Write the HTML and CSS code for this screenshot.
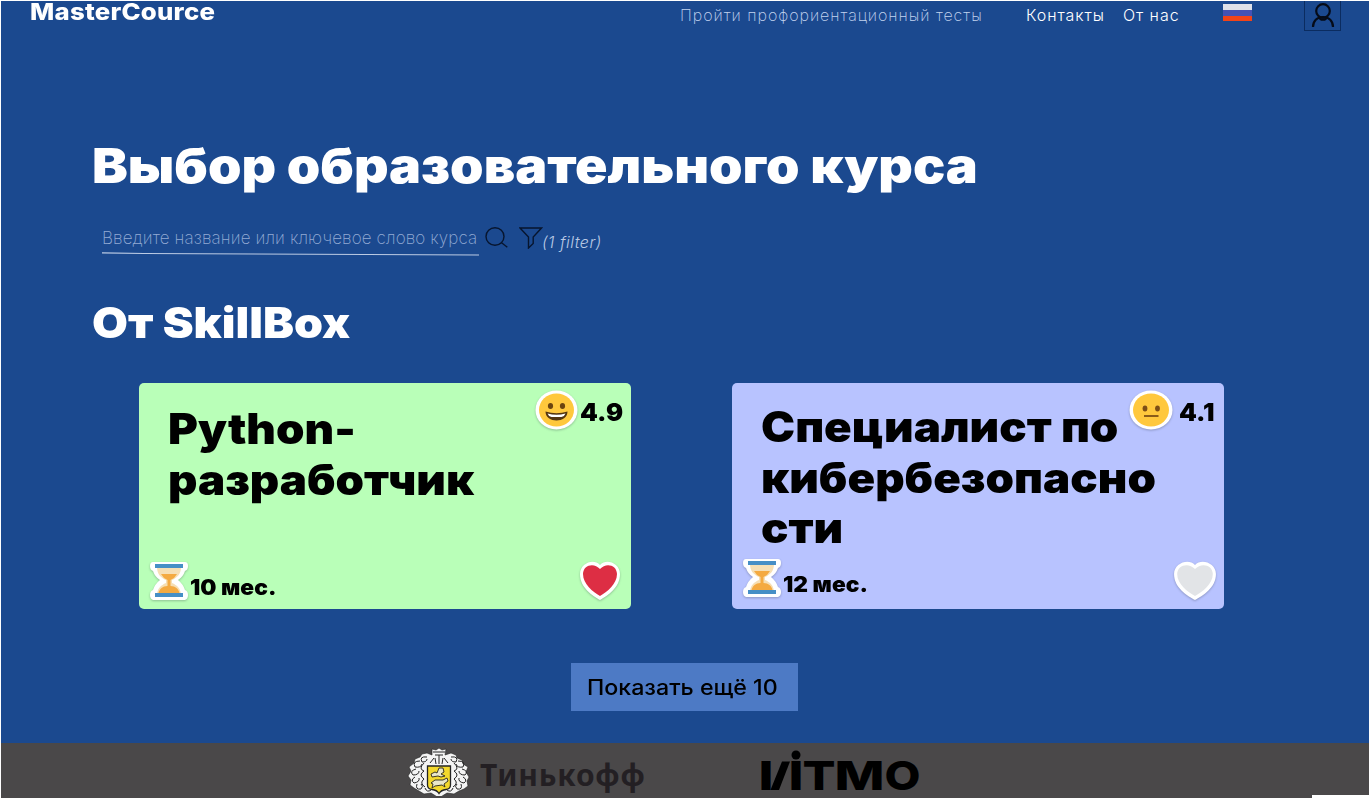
FILE: index.html
```html
<!DOCTYPE html>
<html lang="ru">
<head>
<meta charset="utf-8">
<title>MasterCource</title>
<link rel="stylesheet" href="styles.css">
</head>
<body>
<svg class="defs" aria-hidden="true">
  <defs>
    <symbol id="hourglass" viewBox="0 0 42 42">
      <path class="sticker" d="M5 2h32q3 0 3 4 0 4-3 5-2 6-7 9 5 4 7 10 3 1 3 5t-3 5H5q-3-1-3-5t3-5q2-6 7-10-5-3-7-9-3-1-3-5t3-4z"/>
      <path fill="#f6dfb4" d="M9 7h24c0 7-4 11-9 13v3c5 2 9 6 9 12H9c0-6 4-10 9-12v-3C13 18 9 14 9 7z"/>
      <path fill="#f4aa41" d="M13 14h16q-2 4-6.500 6v6c5 0 8 3 9 7h-21c1-4 4-7 9-7v-6Q15 18 13 14z"/>
      <path fill="#468fc6" d="M7 4h28v4H7zM7 33h28v4H7z"/>
    </symbol>
    <symbol id="heart" viewBox="0 0 42 40" preserveAspectRatio="none">
      <path class="sticker" d="M21 39C14 35 1 27 1 13 1 2 15-3 21 4c6-7 20-2 20 9 0 14-13 22-20 26z"/>
      <path fill="currentColor" d="M21 35C14 31 4 23 4 13 4 4 15 1 21 8c6-7 17-4 17 5 0 10-10 18-17 22z"/>
    </symbol>
  </defs>
</svg>
<div class="page">
  <header class="header">
    <div class="brand"><span>MasterCource</span></div>
    <nav class="nav">
      <a class="nav-tests">Пройти профориентационный тесты</a>
      <a class="nav-contacts">Контакты</a>
      <a class="nav-about">От нас</a>
    </nav>
    <div class="flag"><i class="flag-white"></i><i class="flag-blue"></i><i class="flag-red"></i></div>
    <button class="account" aria-label="Профиль">
      <svg width="24" height="26" viewBox="0 0 24 26"><circle cx="12" cy="9" r="6.800"/><path d="M2 25c0-6 4-10 10-10s10 4 10 10M8 14c0 5 8 5 8 0"/></svg>
    </button>
  </header>
  <main class="main">
    <h1 class="title">Выбор образовательного курса</h1>
    <div class="search">
      <div class="field">
        <span class="placeholder">Введите название или ключевое слово курса</span>
        <svg class="underline" width="377" height="4" viewBox="0 0 377 4"><path d="M0 .8L42 1.500 377 3"/></svg>
      </div>
      <svg class="icon-search" width="24" height="22" viewBox="0 0 24 22"><ellipse cx="10" cy="9.500" rx="9" ry="8.700"/><path d="M16.300 15.500l6 4.700"/></svg>
      <svg class="icon-filter" width="24" height="22" viewBox="0 0 24 22"><path d="M1 1h21.500l-8.300 9v6.500L9.500 21V10z"/></svg>
      <span class="filter-count">(1 filter)</span>
    </div>
    <h2 class="provider">От SkillBox</h2>
    <div class="cards">
      <article class="card card-green">
        <h3 class="card-title">Python-<br>разработчик</h3>
        <div class="rating">
          <svg width="43" height="40" viewBox="0 0 43 40"><ellipse class="sticker" cx="21.500" cy="20" rx="21" ry="19.500"/><ellipse cx="21.500" cy="20" rx="17.500" ry="16.500" fill="#ffc83d"/><ellipse cx="15.500" cy="16" rx="2.600" ry="3" fill="#6b4410"/><ellipse cx="27.500" cy="16" rx="2.600" ry="3" fill="#6b4410"/><path d="M10.500 21.500q11 3.500 22 0c0 12-22 12-22 0z" fill="#543510"/><path d="M12.500 23.500q9 2.500 18 0-1 3-4 3.500h-10q-3-.5-4-3.500z" fill="#fff"/></svg>
          <span>4.9</span>
        </div>
        <div class="duration"><svg width="42" height="42"><use href="#hourglass"/></svg><span>10 мес.</span></div>
        <svg class="like like-on" width="42" height="40"><use href="#heart"/></svg>
      </article>
      <article class="card card-violet">
        <h3 class="card-title">Специалист по<br>кибербезопасно<br>сти</h3>
        <div class="rating">
          <svg width="44" height="40" viewBox="0 0 44 40"><ellipse class="sticker" cx="22" cy="20" rx="21.500" ry="19.500"/><ellipse cx="22" cy="20" rx="18" ry="16.500" fill="#ffc83d"/><ellipse cx="16" cy="18.500" rx="2.400" ry="3" fill="#7d4e16"/><ellipse cx="28.500" cy="18.500" rx="2.400" ry="3" fill="#7d4e16"/><path d="M15 26h14.500" stroke="#7d4e16" stroke-width="1.800"/></svg>
          <span>4.1</span>
        </div>
        <div class="duration"><svg width="42" height="42"><use href="#hourglass"/></svg><span>12 мес.</span></div>
        <svg class="like like-off" width="44" height="40"><use href="#heart"/></svg>
      </article>
    </div>
    <button class="more"><span>Показать ещё 10</span></button>
  </main>
  <footer class="footer">
    <div class="tinkoff">
      <svg width="64" height="48" viewBox="0 0 64 48">
        <path fill="#f4f4f4" stroke="#242424" stroke-width=".6" d="M25 1l4 1 3-2 3 2 4-1-1 6 6-2 5 2 1 3 5 2 1 4 5 3-2 5 3 5-2 4 1 5-4 3-5 2-5 3-7-1-8 5-8-5-7 1-5-3-5-3-4-3 1-5-3-4 3-5-2-4 5-4 1-4 5-2 2-3 5-1 5 2z"/>
        <g fill="none" stroke="#252525" stroke-width="1">
          <path d="M26 4h12M28 7h8M32 7v9M27 10l-4 5M37 10l4 5M28 10l1 6M36 10l-1 6"/>
          <path d="M20 9q-8-1-5 5 5 0 5-3M13 13q-8 0-5 6 6 1 7-3M9 21q-7 2-3 6 6 0 6-4M8 29q-5 3-1 6 6-1 5-5M10 36q-2 6 4 5 3-3 0-5M18 40q2 5 6 2M17 15q-6 6 0 8-6 4 0 8-5 4 1 8"/>
          <path d="M44 9q8-1 5 5-5 0-5-3M51 13q8 0 5 6-6 1-7-3M55 21q7 2 3 6-6 0-6-4M56 29q5 3 1 6-6-1-5-5M54 36q2 6-4 5-3-3 0-5M46 40q-2 5-6 2M47 15q6 6 0 8 6 4 0 8 5 4-1 8"/>
        </g>
        <path fill="#f3d82c" stroke="#242424" stroke-width="1.300" d="M20.500 18h23v19q0 4-4.500 4.500-5 .5-7 4-2-3.500-7-4-4.500-.5-4.500-4.500z"/>
        <path fill="#e9e7c9" stroke="#29261a" stroke-width=".9" d="M24 26l4-2 2 1 2-5 4 0 1 4-3 2 4 2-4 1-3-1-6 1zM24 35l4-3 8 0 4-2 1 3-4 3 1 3-3-2-7 1-3 2 1-4z"/>
      </svg>
      <span>Тинькофф</span>
    </div>
    <svg class="itmo" width="162" height="44" viewBox="0 0 162 44">
      <text x="-1.500" y="40" textLength="15" lengthAdjust="spacingAndGlyphs">I</text>
      <path d="M10.500 40L22 11.500h8L19 40z"/>
      <text x="28.500" y="40" textLength="15" lengthAdjust="spacingAndGlyphs">I</text>
      <circle cx="36" cy="5" r="4.500"/>
      <text x="42.500" y="40" textLength="33" lengthAdjust="spacingAndGlyphs">T</text>
      <text x="74.500" y="40" textLength="50" lengthAdjust="spacingAndGlyphs">M</text>
      <text x="124.500" y="40" textLength="36" lengthAdjust="spacingAndGlyphs">O</text>
    </svg>
    <i class="corner"></i>
  </footer>
</div>
</body>
</html>
```
FILE: styles.css
```css
* { box-sizing: border-box; }
body { margin: 0; background: #fff; font-family: Inter, "Noto Sans", sans-serif; }
h1, h2, h3 { margin: 0; font-weight: 900; white-space: nowrap; transform-origin: 0 50%; }
button { font: inherit; border: 0; padding: 0; }
.defs { position: absolute; width: 0; height: 0; }
.page { width: 1370px; height: 798px; padding: 1px 1px 0; display: flex; flex-direction: column; overflow: hidden; background: #fff; }
.header { height: 31px; display: flex; background: #1b498f; color: #fff; align-items: flex-start; }
.brand { width: 649px; padding-left: 29px; font-size: 23px; line-height: 22px; font-weight: 800; letter-spacing: 0.2px; }
.brand span { display: inline-block; transform: scaleX(1.12); transform-origin: 0 50%; }
.nav { width: 573px; padding: 4px 0 0 30px; display: flex; font-size: 16px; line-height: 20px; font-weight: 300; white-space: nowrap; }
.nav-tests { width: 346px; font-weight: 200; color: #c3d4ef; letter-spacing: 0.97px; }
.nav-contacts { width: 97px; letter-spacing: 0.95px; }
.nav-about { letter-spacing: 0.95px; }
.flag { width: 29px; margin: 3px 0 0; display: grid; grid-template-rows: 6px 6px 5px; }
.flag-white { background: #dfe1e9; }
.flag-blue { background: #4452b4; }
.flag-red { background: #f24418; }
.account { width: 37px; height: 30px; margin-left: 52px; border: 1px solid #0b2c60; border-top: 0; background: none; display: flex; justify-content: center; padding-top: 1px; }
.account svg { fill: none; stroke: #050b18; stroke-width: 2.2; }
.main { height: 711px; flex: none; background: #1b498f; display: flex; flex-direction: column; align-items: flex-start; padding: 105px 0 0 91px; }
.title { color: #fff; font-size: 48px; line-height: 58px; transform: scaleX(1.118); }
.search { height: 40px; margin: 29px 0 0 10px; display: flex; align-items: flex-start; }
.field { width: 377px; display: flex; flex-direction: column; }
.placeholder { font-size: 17px; line-height: 24px; font-weight: 200; color: #93abd4; white-space: nowrap; letter-spacing: 0.13px; margin: 2px 0 1.5px; }
.underline { fill: none; stroke: #bccbe4; stroke-width: 1.2; }
.icon-search { margin: 3px 0 0 6px; fill: none; stroke: #07152e; stroke-width: 1.4; }
.icon-filter { margin: 3px 0 0 10px; fill: none; stroke: #07152e; stroke-width: 1.4; }
.filter-count { font-size: 16px; line-height: 20px; font-style: italic; font-weight: 300; color: #b9c9e5; margin-top: 8px; white-space: nowrap; letter-spacing: 0.5px; margin-left: -1px; }
.provider { color: #fff; font-size: 42px; line-height: 50px; margin-top: 34px; transform: scaleX(1.105); }
.cards { display: flex; gap: 101px; margin: 35px 0 0 47px; }
.card { position: relative; width: 492px; height: 226px; border-radius: 5px; padding: 21px 0 0 29px; color: #000; }
.card-green { background: #b9ffb8; }
.card-violet { background: #b8c3ff; }
.card-title { font-size: 42px; line-height: 50.5px; width: 400px; transform: scaleX(1.087); }
.card-violet .card-title { margin-top: -2px; }
.sticker { fill: #fff; }
.card svg { filter: drop-shadow(0 1px 1px rgba(40, 50, 60, .3)); overflow: visible; }
.rating { position: absolute; top: 7px; left: 396px; display: flex; align-items: center; font-size: 24px; font-weight: 900; gap: 2px; }
.rating span, .duration span { transform: scaleX(1.06); transform-origin: 0 50%; }
.rating span { padding-top: 4px; }
.card-violet .rating { left: 397px; gap: 6px; }
.duration { position: absolute; left: 9px; bottom: 7px; display: flex; align-items: flex-end; font-size: 21.5px; line-height: 28px; font-weight: 900; white-space: nowrap; }
.duration span { margin-bottom: 1px; }
.card-violet .duration { bottom: 10px; }
.like { position: absolute; right: 10px; bottom: 8px; }
.like-on { color: #dd2e44; }
.like-off { color: #e2e4e7; right: 7px; }
.more { width: 227px; height: 48px; margin: 54px 0 0 479px; background: #4d7ac5; color: #000; font-size: 21px; font-weight: 500; white-space: nowrap; }
.more span { display: inline-block; transform: scaleX(1.105); margin-left: -4px; padding-top: 1px; }
.footer { position: relative; flex: 1; min-height: 0; background: #4a4849; display: flex; padding-left: 406px; }
.tinkoff { width: 353px; display: flex; color: #231f23; font-family: "Noto Sans", sans-serif; font-weight: 700; font-size: 30px; line-height: 40px; padding-top: 5px; gap: 9px; letter-spacing: 0.8px; }
.tinkoff span { padding-top: 7px; }
.itmo { margin-top: 7px; fill: #000; font-family: Inter, sans-serif; font-weight: 800; font-size: 40px; overflow: visible; }
.corner { position: absolute; right: -1px; bottom: 0; width: 58px; height: 3px; background: #fff; }
```
